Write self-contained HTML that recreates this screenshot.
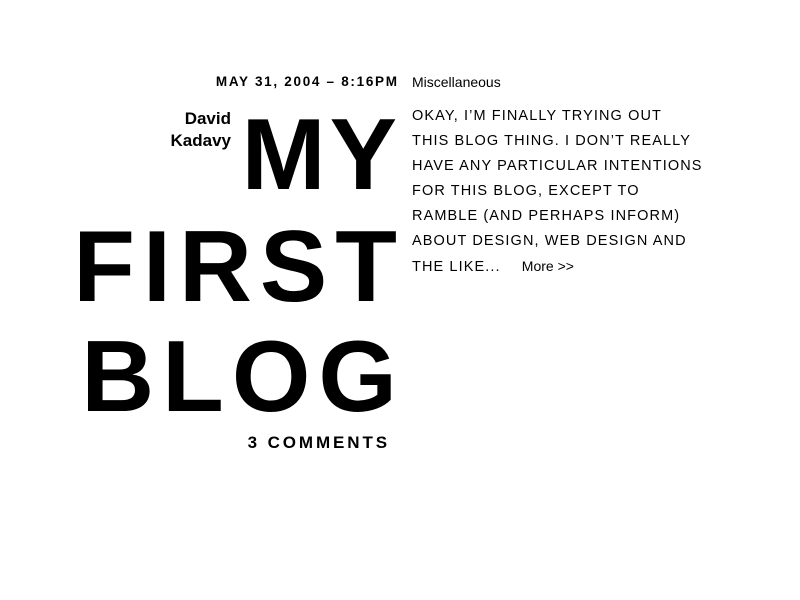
<!DOCTYPE html>
<html><head><style>
html,body{margin:0;padding:0;background:#fff;width:800px;height:600px;overflow:hidden}
body{font-family:"Liberation Sans",Arial,sans-serif;color:#000;position:relative}
.a{position:absolute;white-space:nowrap}
.big{font-weight:bold;font-size:101px;line-height:101px;letter-spacing:8px;right:403px;margin-right:-8px}
</style></head><body>
<div class="a" style="right:403px;top:73px;font-size:13.5px;line-height:18px;font-weight:bold;letter-spacing:1.7px;margin-right:-1.7px">MAY 31, 2004 – 8:16PM</div>
<div class="a" style="left:412px;top:73px;font-size:14px;line-height:18px">Miscellaneous</div>
<div class="a" style="right:569px;top:108px;font-size:17px;line-height:22px;font-weight:bold;text-align:right">David<br>Kadavy</div>
<div class="a big" style="top:105px;letter-spacing:4px;margin-right:-4px">MY</div>
<div class="a big" style="top:217px">FIRST</div>
<div class="a big" style="top:327px">BLOG</div>
<div class="a" style="right:410px;top:433px;font-size:17px;line-height:20px;font-weight:bold;letter-spacing:2.9px">3 COMMENTS</div>
<div class="a" style="left:412px;top:104px;font-size:14.5px;line-height:25px;letter-spacing:1.1px">OKAY, I’M FINALLY TRYING OUT<br>THIS BLOG THING. I DON’T REALLY<br>HAVE ANY PARTICULAR INTENTIONS<br>FOR THIS BLOG, EXCEPT TO<br>RAMBLE (AND PERHAPS INFORM)<br>ABOUT DESIGN, WEB DESIGN AND<br>THE LIKE... <span style="letter-spacing:0;margin-left:16px;font-size:14px">More &gt;&gt;</span></div>
</body></html>
